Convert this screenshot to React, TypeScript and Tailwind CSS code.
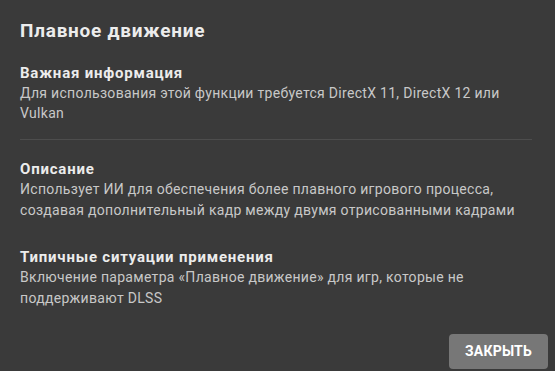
import React from "react";

const sections = [
  {
    title: "Описание",
    text: "Использует ИИ для обеспечения более плавного игрового процесса, создавая дополнительный кадр между двумя отрисованными кадрами",
    gap: "mt-[19px]",
  },
  {
    title: "Типичные ситуации применения",
    text: "Включение параметра «Плавное движение» для игр, которые не поддерживают DLSS",
    gap: "mt-[26px]",
  },
];

export default function App() {
  return (
    <div className="w-[555px] h-[371px] bg-[#3a3a3a] text-[#e8e8e8] flex flex-col overflow-hidden font-['Roboto',sans-serif]">
      <div className="px-5 pt-[18px] flex-1">
        <h1 className="text-[19px] font-bold leading-[26px] tracking-[0.75px] text-[#ececec]">
          Плавное движение
        </h1>

        {/* important info + divider */}
        <div className="mt-[19px] w-[512px] border-b border-[#4d4d4d] pb-[16px]">
          <h2 className="text-[15px] font-bold leading-[20px] tracking-[0.8px] text-[#ececec]">
            Важная информация
          </h2>
          <p className="text-[14px] leading-[20px] tracking-[0.3px] text-[#c8c8c8] w-[500px]">
            Для использования этой функции требуется DirectX 11, DirectX 12 или Vulkan
          </p>
        </div>

        {sections.map((s, i) => (
          <div key={i} className={`${s.gap} w-[512px]`}>
            <h2 className="text-[15px] font-bold leading-[20px] tracking-[0.8px] text-[#ececec]">
              {s.title}
            </h2>
            <p className="text-[14px] leading-[21px] tracking-[0.3px] text-[#c8c8c8] w-[500px]">
              {s.text}
            </p>
          </div>
        ))}
      </div>

      <div className="flex justify-end pr-[7px] pb-[2px]">
        <button className="w-[99px] h-[35px] rounded-[4px] bg-[#777777] text-white text-[14px] font-bold tracking-[0.2px]">
          ЗАКРЫТЬ
        </button>
      </div>
    </div>
  );
}
